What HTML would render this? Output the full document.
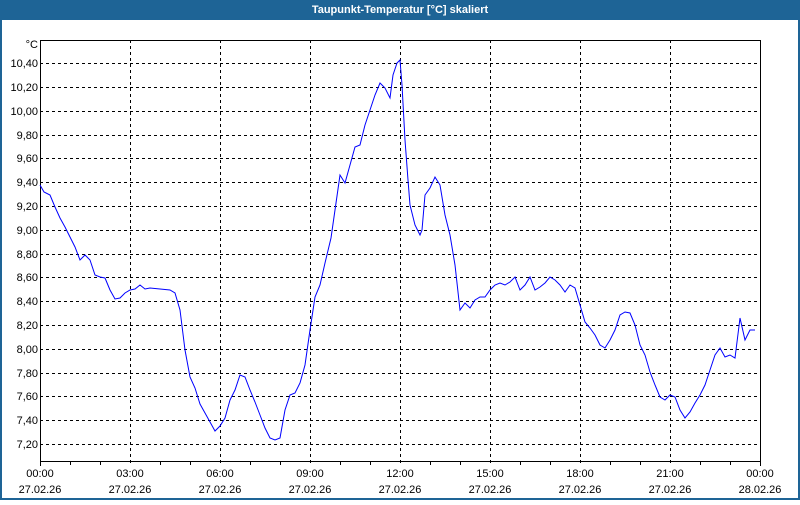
<!DOCTYPE html>
<html><head><meta charset="utf-8"><style>
body{margin:0;width:800px;height:500px;overflow:hidden;background:#fff;font-family:"Liberation Sans",sans-serif}
</style></head><body>
<svg width="800" height="500" xmlns="http://www.w3.org/2000/svg" font-family="Liberation Sans, sans-serif">
<rect x="0" y="0" width="800" height="500" fill="#1e6496"/>
<rect x="2" y="20" width="796" height="478" fill="#fff"/>
<text x="400" y="13" fill="#fff" font-size="11" font-weight="bold" text-anchor="middle">Taupunkt-Temperatur [°C] skaliert</text>
<g stroke="#000" stroke-dasharray="3,3" stroke-width="1">
<line x1="40" y1="63.5" x2="760" y2="63.5"/><line x1="40" y1="87.5" x2="760" y2="87.5"/><line x1="40" y1="111.5" x2="760" y2="111.5"/><line x1="40" y1="135.5" x2="760" y2="135.5"/><line x1="40" y1="158.5" x2="760" y2="158.5"/><line x1="40" y1="182.5" x2="760" y2="182.5"/><line x1="40" y1="206.5" x2="760" y2="206.5"/><line x1="40" y1="230.5" x2="760" y2="230.5"/><line x1="40" y1="254.5" x2="760" y2="254.5"/><line x1="40" y1="277.5" x2="760" y2="277.5"/><line x1="40" y1="301.5" x2="760" y2="301.5"/><line x1="40" y1="325.5" x2="760" y2="325.5"/><line x1="40" y1="349.5" x2="760" y2="349.5"/><line x1="40" y1="373.5" x2="760" y2="373.5"/><line x1="40" y1="396.5" x2="760" y2="396.5"/><line x1="40" y1="420.5" x2="760" y2="420.5"/><line x1="40" y1="444.5" x2="760" y2="444.5"/>
<line x1="130.5" y1="40" x2="130.5" y2="466"/><line x1="220.5" y1="40" x2="220.5" y2="466"/><line x1="310.5" y1="40" x2="310.5" y2="466"/><line x1="400.5" y1="40" x2="400.5" y2="466"/><line x1="490.5" y1="40" x2="490.5" y2="466"/><line x1="580.5" y1="40" x2="580.5" y2="466"/><line x1="670.5" y1="40" x2="670.5" y2="466"/>
</g>
<g stroke="#000" stroke-width="1" fill="none">
<path d="M40.5 40.5H760.5V461.5H40.5Z"/>
<path d="M40.5 461V466M70.5 461V465M100.5 461V465M160.5 461V465M190.5 461V465M250.5 461V465M280.5 461V465M340.5 461V465M370.5 461V465M430.5 461V465M460.5 461V465M520.5 461V465M550.5 461V465M610.5 461V465M640.5 461V465M700.5 461V465M730.5 461V465M760.5 461V466"/>
</g>
<polyline fill="none" stroke="#0000ff" stroke-width="1" points="40,185 44,192 50,195 55,207 60,218 65,227 70,237 75,247 80,260 85,255 90,260 95,275 100,277 105,278 110,290 115,299 120,298 125,293 130,290 135,289 140,285 145,289 150,288 160,289 170,290 175,293 180,310 185,350 190,377 195,388 200,404 205,413 210,422 215,431 220,426 225,418 230,400 235,390 240,375 245,377 250,390 255,402 260,415 265,428 270,438 275,440 280,438 285,410 290,395 295,393 300,383 305,365 310,330 315,297 320,285 325,263 331,238 335,210 340,175 345,183 350,165 355,147 360,145 365,125 370,110 375,95 380,83 385,88 390,98 393,75 397,63 400,60 402,85 405,140 408,180 410,205 415,225 420,235 422,230 425,195 430,188 435,177 440,185 445,215 450,235 455,265 460,310 465,303 470,308 475,300 480,297 485,297 490,290 495,285 500,283 505,285 510,282 515,277 520,290 525,285 530,277 535,290 540,287 545,283 550,277 555,280 560,285 565,292 570,285 575,288 580,305 585,322 590,328 595,335 600,345 605,348 610,340 615,330 620,315 625,312 630,313 635,325 640,345 645,355 650,372 655,385 660,397 665,400 670,395 675,397 680,410 685,418 690,412 695,403 700,395 705,385 710,370 715,355 720,348 725,357 730,355 735,358 740,318 745,340 750,330 755,330"/>
<g font-size="11" fill="#000" text-anchor="end">
<text x="38" y="48">°C</text>
<text x="38" y="67">10,40</text><text x="38" y="91">10,20</text><text x="38" y="115">10,00</text><text x="38" y="139">9,80</text><text x="38" y="162">9,60</text><text x="38" y="186">9,40</text><text x="38" y="210">9,20</text><text x="38" y="234">9,00</text><text x="38" y="258">8,80</text><text x="38" y="281">8,60</text><text x="38" y="305">8,40</text><text x="38" y="329">8,20</text><text x="38" y="353">8,00</text><text x="38" y="377">7,80</text><text x="38" y="400">7,60</text><text x="38" y="424">7,40</text><text x="38" y="448">7,20</text>
</g>
<g font-size="11" fill="#000" text-anchor="middle">
<text x="40" y="477">00:00</text><text x="40" y="493">27.02.26</text>
<text x="130" y="477">03:00</text><text x="130" y="493">27.02.26</text>
<text x="220" y="477">06:00</text><text x="220" y="493">27.02.26</text>
<text x="310" y="477">09:00</text><text x="310" y="493">27.02.26</text>
<text x="400" y="477">12:00</text><text x="400" y="493">27.02.26</text>
<text x="490" y="477">15:00</text><text x="490" y="493">27.02.26</text>
<text x="580" y="477">18:00</text><text x="580" y="493">27.02.26</text>
<text x="670" y="477">21:00</text><text x="670" y="493">27.02.26</text>
<text x="760" y="477">00:00</text><text x="760" y="493">28.02.26</text>
</g>
</svg>
</body></html>
